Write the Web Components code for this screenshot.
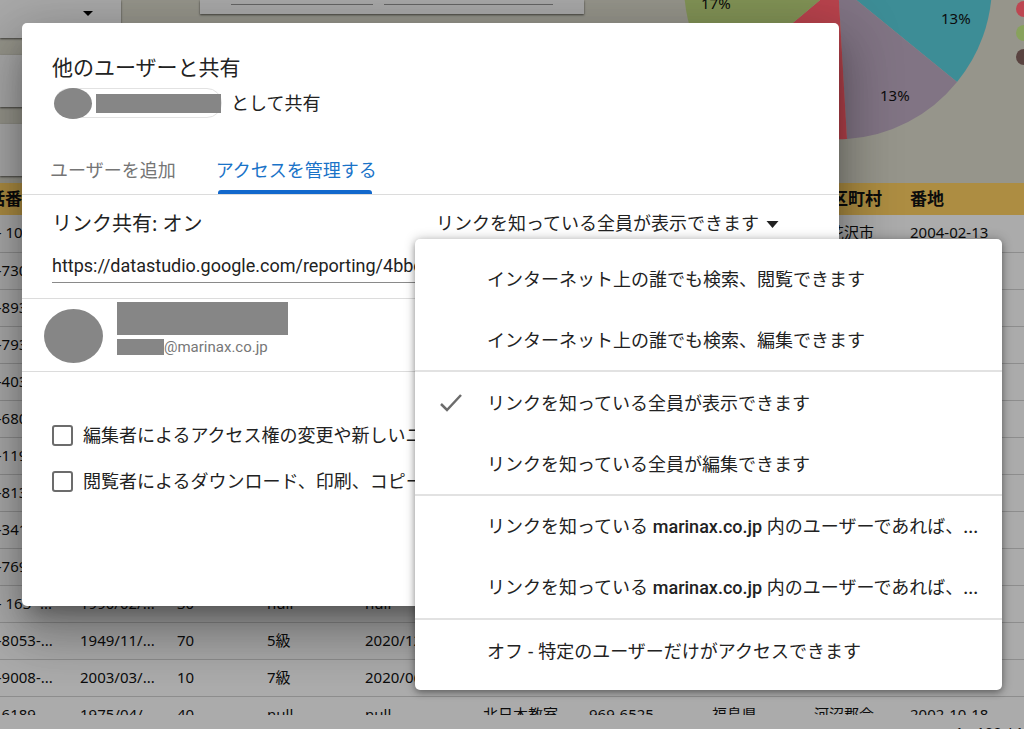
<!DOCTYPE html>
<html lang="ja">
<head>
<meta charset="utf-8">
<title>他のユーザーと共有</title>
<style>
html,body{margin:0;height:100%}
body{font-family:"Noto Sans","Noto Sans CJK JP",sans-serif;color:#222;overflow:hidden}
</style>
</head>
<body>
<share-app></share-app>

<template id="t-app">
<style>
:host{display:block;position:relative;height:100vh;overflow:hidden}
share-dialog{position:absolute;top:23px;left:22px;width:calc(100% - 44px);max-width:817px}
</style>
<report-page></report-page>
<share-dialog></share-dialog>
</template>

<template id="t-report">
<style>
:host{display:flex;flex-direction:column;height:100%;background:#ababab;color:#0c0c0c;font-size:15px}
.top{display:flex;height:183px;flex:none;background:#96958b;overflow:hidden}
.filters{width:121px;flex:none;display:flex;flex-direction:column;gap:17px}
.card{background:#a9a9a9;box-shadow:0 1px 2px rgba(0,0,0,.6);height:52px;flex:none}
.filters .card:first-child{height:38px;display:flex;justify-content:flex-end}
.filters svg{margin:11px 28px 0 0;width:10px;height:6px}
.wide{width:384px;height:14px;margin-left:79px;box-sizing:border-box;padding:4px 31px 0;display:flex;gap:11px}
.wide i{height:1px;background:#666;flex:142}
.wide i+i{flex:168}
.pie{width:308px;height:154px;margin-left:100px;flex:none}
.pie text{font-size:15px;fill:#0c0c0c}
.legend{margin:1px 0 0 24px;display:flex;flex-direction:column;gap:8px}
.legend b{width:16px;height:16px;border-radius:50%}
.rows{flex:1;min-height:0;overflow:hidden}
.foot{height:14px;flex:none;overflow:hidden;display:flex;justify-content:flex-end}
.foot span{padding:7px 0 0;width:69px;white-space:nowrap;line-height:20px}
</style>
<div class="top">
  <div class="filters"><div class="card"><svg viewBox="0 0 10 6"><path d="M0 0h10L5 5z"/></svg></div><div class="card"></div><div class="card"></div></div>
  <div class="card wide"><i></i><i></i></div>
  <svg class="pie" viewBox="684 0 308 154">
    <path d="M838-15L992-15A154 154 0 0 1 957 82Z" fill="#3d8d96"/>
    <path d="M838-15L957 82A154 154 0 0 1 847 139Z" fill="#817484"/>
    <path d="M838-15L847 139A154 154 0 0 1 720 84Z" fill="#b9434d"/>
    <path d="M838-15L720 84A154 154 0 0 1 684-15Z" fill="#829356"/>
    <text x="701" y="9">17%</text><text x="941" y="24">13%</text><text x="880" y="101">13%</text>
  </svg>
  <div class="legend"><b style="background:#bd4651"></b><b style="background:#88a25c"></b><b style="background:#594340"></b></div>
</div>
<div class="rows"><data-table></data-table></div>
<div class="foot"><span>1 - 100 / 1000</span></div>
</template>

<template id="t-table">
<style>
:host{display:block}
table{border-collapse:collapse;table-layout:fixed;width:calc(100% + 29px);margin-left:-29px}
th,td{padding:0;text-align:left;white-space:nowrap;overflow:hidden;box-sizing:border-box}
th{height:32px;background:#ad8d42;font-size:17px;line-height:24px;font-weight:700}
td{height:37px;padding-bottom:2px;border-bottom:1px solid #8d8d8d;font-size:15px;line-height:20px}
</style>
<table><colgroup></colgroup><thead><tr></tr></thead><tbody></tbody></table>
</template>

<template id="t-dialog">
<style>
:host{display:block;background:#fff;border-radius:5px;height:583px;font-size:18px;line-height:24px;
 box-shadow:0 14px 19px -9px rgba(0,0,0,.3),0 30px 48px 4px rgba(0,0,0,.2),0 11px 58px 10px rgba(0,0,0,.18)}
h2{margin:0;padding:30px 30px 0;font-size:21px;line-height:28px;font-weight:400}
.as{display:flex;align-items:center;gap:9px;padding:6px 32px 0;height:32px}
.pill{display:flex;align-items:center;gap:4px;width:168px;height:30px;box-sizing:border-box;border:1px solid #e2e2e2;border-radius:15px}
.pill i{width:38px;height:31px;border-radius:50%;background:#868686;flex:none;margin-left:-1px}
.pill b{flex:1;height:19px;background:#868686}
nav{display:flex;gap:38px;padding:39px 27px 0;border-bottom:1px solid #dcdcdc}
section{padding:0 30px;border-bottom:1px solid #dcdcdc;box-sizing:border-box}
.link{height:104px;padding-top:14px}
.bar{display:flex;align-items:center;height:30px}
h3{margin:0;font-size:20px;line-height:30px;font-weight:400;width:384px;flex:none}
input.url{display:block;width:100%;height:32px;margin-top:12px;padding:0 0 3px;border:0;border-bottom:1px solid #8a8a8a;box-sizing:border-box;font:18px/24px Roboto,sans-serif;color:#222;outline:0;background:none;border-radius:0}
.person{display:flex;gap:14px;height:73px;padding:3px 22px 0}
.avatar{width:59px;height:54px;margin-top:7px;border-radius:50%;background:#868686}
.name{width:171px;height:33px;background:#868686}
.mail{display:flex;align-items:center;height:16px;margin-top:4px;font:15px/16px Roboto,sans-serif;color:#777}
.mail i{width:47px;height:16px;background:#868686}
.opts{padding:48px 30px 0;display:flex;flex-direction:column;gap:16px}
</style>
<h2>他のユーザーと共有</h2>
<div class="as"><span class="pill"><i></i><b></b></span><span>として共有</span></div>
<nav role="tablist"><share-tab>ユーザーを追加</share-tab><share-tab active>アクセスを管理する</share-tab></nav>
<section class="link">
  <div class="bar"><h3>リンク共有: オン</h3><access-select></access-select></div>
  <input class="url" aria-label="リンク" readonly value="https://datastudio.google.com/reporting/4bbe">
</section>
<section class="person"><div class="avatar"></div><div><div class="name"></div><div class="mail"><i></i>@marinax.co.jp</div></div></section>
<div class="opts">
  <check-option>編集者によるアクセス権の変更や新しいユ</check-option>
  <check-option>閲覧者によるダウンロード、印刷、コピー</check-option>
</div>
</template>

<template id="t-tab">
<style>
:host{display:block}
button{all:unset;display:block;padding:0 1px 12px;font-size:18px;line-height:24px;color:#757575;cursor:pointer;position:relative}
:host([active]) button{color:#1a73c8}
:host([active]) button::after{content:"";position:absolute;left:3px;right:6px;bottom:0;height:4px;background:#1268cc;border-radius:3px 3px 0 0}
</style>
<button role="tab"><slot></slot></button>
</template>

<template id="t-check">
<style>
:host{display:block}
label{display:flex;align-items:center;gap:10px;height:30px;overflow:hidden;white-space:nowrap}
input{appearance:none;width:21px;height:21px;margin:0;flex:none;border:2px solid #6c6c6c;border-radius:3px;box-sizing:border-box}
</style>
<label><input type="checkbox"><span><slot></slot></span></label>
</template>

<template id="t-select">
<style>
:host{display:block;position:relative}
.box{display:flex;align-items:center;gap:6px}
select{appearance:none;border:0;padding:0 0 2px;margin:0;background:none;font:inherit;color:#222;outline:0;height:28px}
svg{width:13px;height:7px}
.menu{position:absolute;top:29px;left:-21px;width:587px;box-sizing:border-box;padding:9px 0;background:#fff;border-radius:5px;
 box-shadow:0 3px 6px rgba(0,0,0,.3),0 0 12px rgba(0,0,0,.24)}
hr{margin:0;border:0;height:2px;background:#e2e2e2}
</style>
<div class="box"><select aria-label="アクセス権"><option>リンクを知っている全員が表示できます</option></select><svg viewBox="0 0 12 7"><path d="M0 0h12L6 7z" fill="#222"/></svg></div>
<div class="menu" role="menu">
<menu-option>インターネット上の誰でも検索、閲覧できます</menu-option>
<menu-option>インターネット上の誰でも検索、編集できます</menu-option>
<hr>
<menu-option checked>リンクを知っている全員が表示できます</menu-option>
<menu-option>リンクを知っている全員が編集できます</menu-option>
<hr>
<menu-option>リンクを知っている <b>marinax.co.jp</b> 内のユーザーであれば、<b>...</b></menu-option>
<menu-option>リンクを知っている <b>marinax.co.jp</b> 内のユーザーであれば、<b>...</b></menu-option>
<hr>
<menu-option>オフ - 特定のユーザーだけがアクセスできます</menu-option>
</div>
</template>

<template id="t-option">
<style>
:host{display:block}
button{all:unset;display:flex;align-items:center;width:100%;height:61px;box-sizing:border-box;padding-left:24px;font-size:18px;line-height:24px;white-space:nowrap;cursor:pointer}
svg{width:24px;height:20px;margin-right:24px;visibility:hidden;flex:none}
:host([checked]) svg{visibility:visible}
::slotted(b){font-family:Roboto,sans-serif;font-weight:500}
</style>
<button role="menuitemradio"><svg viewBox="0 0 24 20"><path d="M2 11l6 6L22 2" fill="none" stroke="#6c6c6c" stroke-width="2.5"/></svg><span><slot></slot></span></button>
</template>

<script>
function define(name, id, setup) {
  customElements.define(name, class extends HTMLElement {
    constructor() {
      super();
      this.attachShadow({mode: 'open'}).append(document.getElementById(id).content.cloneNode(true));
      if (setup) setup(this.shadowRoot);
    }
  });
}
define('menu-option', 't-option');
define('access-select', 't-select');
define('check-option', 't-check');
define('share-tab', 't-tab');
define('data-table', 't-table', root => {
  const widths = [109, 97, 90, 98, 118, 106, 123, 102, 96, 0];
  const heads = ['電話番号', '', '', '', '', '', '', '', '市区町村', '番地'];
  const rows = [
    ['090- 102', '', '', '', '', '', '', '', '尾花沢市', '2004-02-13'],
    ['090-730'], ['090-893'], ['090-793'], ['090-403'], ['090-680'], ['090-119'], ['090-813'], ['090-341'], ['090-769'],
    ['090- 163 -...', '1990/02/...', '30', 'null', 'null'],
    ['090-8053-...', '1949/11/...', '70', '5級', '2020/12'],
    ['090-9008-...', '2003/03/...', '10', '7級', '2020/06'],
    ['090-6189-...', '1975/04/...', '40', 'null', 'null', '北日本教室', '969-6525', '福島県', '河沼郡会', '2002-10-18']
  ];
  for (const w of widths) {
    const c = document.createElement('col');
    if (w) c.style.width = w + 'px';
    root.querySelector('colgroup').append(c);
  }
  const fill = (tr, tag, values) => widths.forEach((_, i) => {
    const cell = document.createElement(tag);
    cell.textContent = values[i] || '';
    tr.append(cell);
  });
  fill(root.querySelector('thead tr'), 'th', heads);
  for (const r of rows) {
    const tr = document.createElement('tr');
    fill(tr, 'td', r);
    root.querySelector('tbody').append(tr);
  }
});
define('report-page', 't-report');
define('share-dialog', 't-dialog');
define('share-app', 't-app');
</script>
</body>
</html>
